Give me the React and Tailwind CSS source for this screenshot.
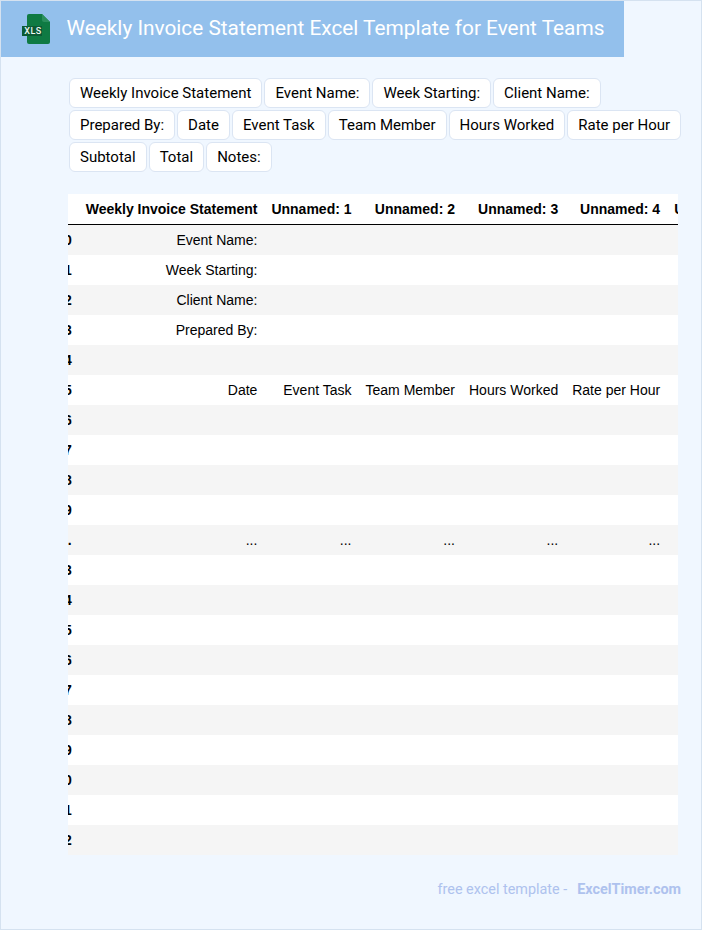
import React from 'react';

const chips = [
  'Weekly Invoice Statement', 'Event Name:', 'Week Starting:', 'Client Name:',
  'Prepared By:', 'Date', 'Event Task', 'Team Member', 'Hours Worked', 'Rate per Hour',
  'Subtotal', 'Total', 'Notes:',
];

const columns = ['Weekly Invoice Statement', 'Unnamed: 1', 'Unnamed: 2', 'Unnamed: 3', 'Unnamed: 4', 'Unnamed: 5'];

// index + cell values, blank cells stay empty
const rows = [
  ['0', 'Event Name:'],
  ['1', 'Week Starting:'],
  ['2', 'Client Name:'],
  ['3', 'Prepared By:'],
  ['4'],
  ['5', 'Date', 'Event Task', 'Team Member', 'Hours Worked', 'Rate per Hour', 'Subtotal'],
  ['6'], ['7'], ['8'], ['9'],
  ['...', '...', '...', '...', '...', '...', '...'],
  ['23'], ['24'], ['25'], ['26'], ['27'], ['28'], ['29'], ['30'], ['31'], ['32'],
];

const XlsIcon = () => (
  <svg width="28" height="30" viewBox="0 0 28 30" className="shrink-0">
    <path d="M5 2a2 2 0 0 1 2-2h13l8 8v20a2 2 0 0 1-2 2H7a2 2 0 0 1-2-2z" fill="#0f7a43" />
    <path d="M20 0l8 8h-6a2 2 0 0 1-2-2z" fill="#2b8f5d" />
    <rect x="0" y="12" width="20" height="10" fill="#0b5a35" />
    <text x="11" y="20.3" textAnchor="middle" fontSize="9" fontWeight="500" letterSpacing="0.5" fill="#eef7f2" fontFamily="Roboto, sans-serif">XLS</text>
  </svg>
);

export default function App() {
  return (
    <div className="w-[702px] h-[930px] overflow-hidden bg-[#f0f7ff] border border-[#d5e2f0] font-['Roboto',sans-serif]">
      {/* Title bar */}
      <div className="flex items-center w-[623px] h-[56px] bg-[#93c0ec] pl-[21px]">
        <XlsIcon />
        <h1 className="ml-[16.6px] -mt-[2px] text-[20.8px] leading-none font-normal text-white whitespace-nowrap">
          Weekly Invoice Statement Excel Template for Event Teams
        </h1>
      </div>

      {/* Field chips */}
      <div className="flex flex-wrap gap-[2px] ml-[68px] w-[620px] mt-[21px]">
        {chips.map((chip) => (
          <span
            key={chip}
            className="h-[30px] px-[10px] flex items-center bg-white border border-[#dbe5f3] rounded-[6px] text-[15px] text-black whitespace-nowrap"
          >
            {chip}
          </span>
        ))}
      </div>

      {/* Data preview, index column is scrolled partly out of view */}
      <div className="ml-[67px] mt-[22px] w-[610px] overflow-hidden bg-white">
        <table className="-ml-[18.9px] border-separate border-spacing-0 font-['Liberation_Sans',Arial,sans-serif] text-[14px] text-black whitespace-nowrap">
          <thead>
            <tr className="h-[31px]">
              <th className="px-[7px] border-b border-black"><span className="invisible">32</span></th>
              {columns.map((col) => (
                <th key={col} className="px-[7px] border-b border-black text-right font-bold">{col}</th>
              ))}
            </tr>
          </thead>
          <tbody>
            {rows.map((row, i) => (
              <tr key={row[0]} className={i % 2 === 0 ? 'h-[30px] bg-[#f5f5f5]' : 'h-[30px] bg-white'}>
                <th className="px-[7px] text-right font-bold">{row[0]}</th>
                {columns.map((col, j) => (
                  <td key={col} className="px-[7px] text-right font-normal">{row[j + 1]}</td>
                ))}
              </tr>
            ))}
          </tbody>
        </table>
      </div>

      {/* Footer */}
      <div className="flex justify-end mt-[24px] w-[680px] text-[14.4px] text-[#aec2ee] whitespace-nowrap">
        <span>free excel template -</span>
        <span className="ml-[10px] font-bold">ExcelTimer.com</span>
      </div>
    </div>
  );
}
